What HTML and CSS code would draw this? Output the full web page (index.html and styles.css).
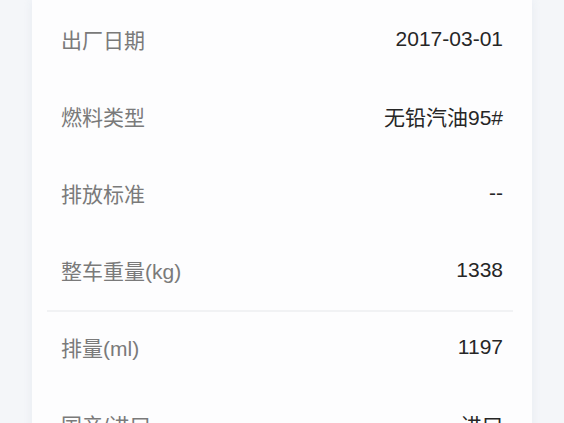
FILE: index.html
```html
<!DOCTYPE html>
<html lang="zh-CN">
<head>
<meta charset="utf-8">
<link rel="stylesheet" href="styles.css">
</head>
<body>
<div class="page">
  <div class="card">
    <div class="row"><span class="label">出厂日期</span><span class="value">2017-03-01</span></div>
    <div class="row"><span class="label">燃料类型</span><span class="value">无铅汽油95#</span></div>
    <div class="row"><span class="label">排放标准</span><span class="value">--</span></div>
    <div class="row row-last"><span class="label">整车重量(kg)</span><span class="value">1338</span></div>
    <div class="divider"></div>
    <div class="row"><span class="label">排量(ml)</span><span class="value">1197</span></div>
    <div class="row"><span class="label">国产/进口</span><span class="value">进口</span></div>
  </div>
</div>
</body>
</html>
```
FILE: styles.css
```css
html, body {
  margin: 0;
  padding: 0;
  background: #f4f6f9;
  font-family: "Liberation Sans", "Noto Sans CJK SC", sans-serif;
}
.page {
  height: 423px;
  overflow: hidden;
  padding: 0 32px;
}
.card {
  background: #fdfdfe;
  padding-top: 4px;
  box-shadow: 0 0 8px rgba(220, 226, 236, 0.6);
  min-height: 600px;
}
.row {
  box-sizing: border-box;
  height: 77px;
  display: flex;
  align-items: center;
  justify-content: space-between;
  padding: 0 29px 7px;
  font-size: 21px;
}
.row-last {
  height: 76px;
}
.label {
  color: #7a7a7a;
}
.value {
  color: #262626;
}
.divider {
  height: 2px;
  margin: -1px 19px 0 15px;
  background: #f1f2f4;
}
```
